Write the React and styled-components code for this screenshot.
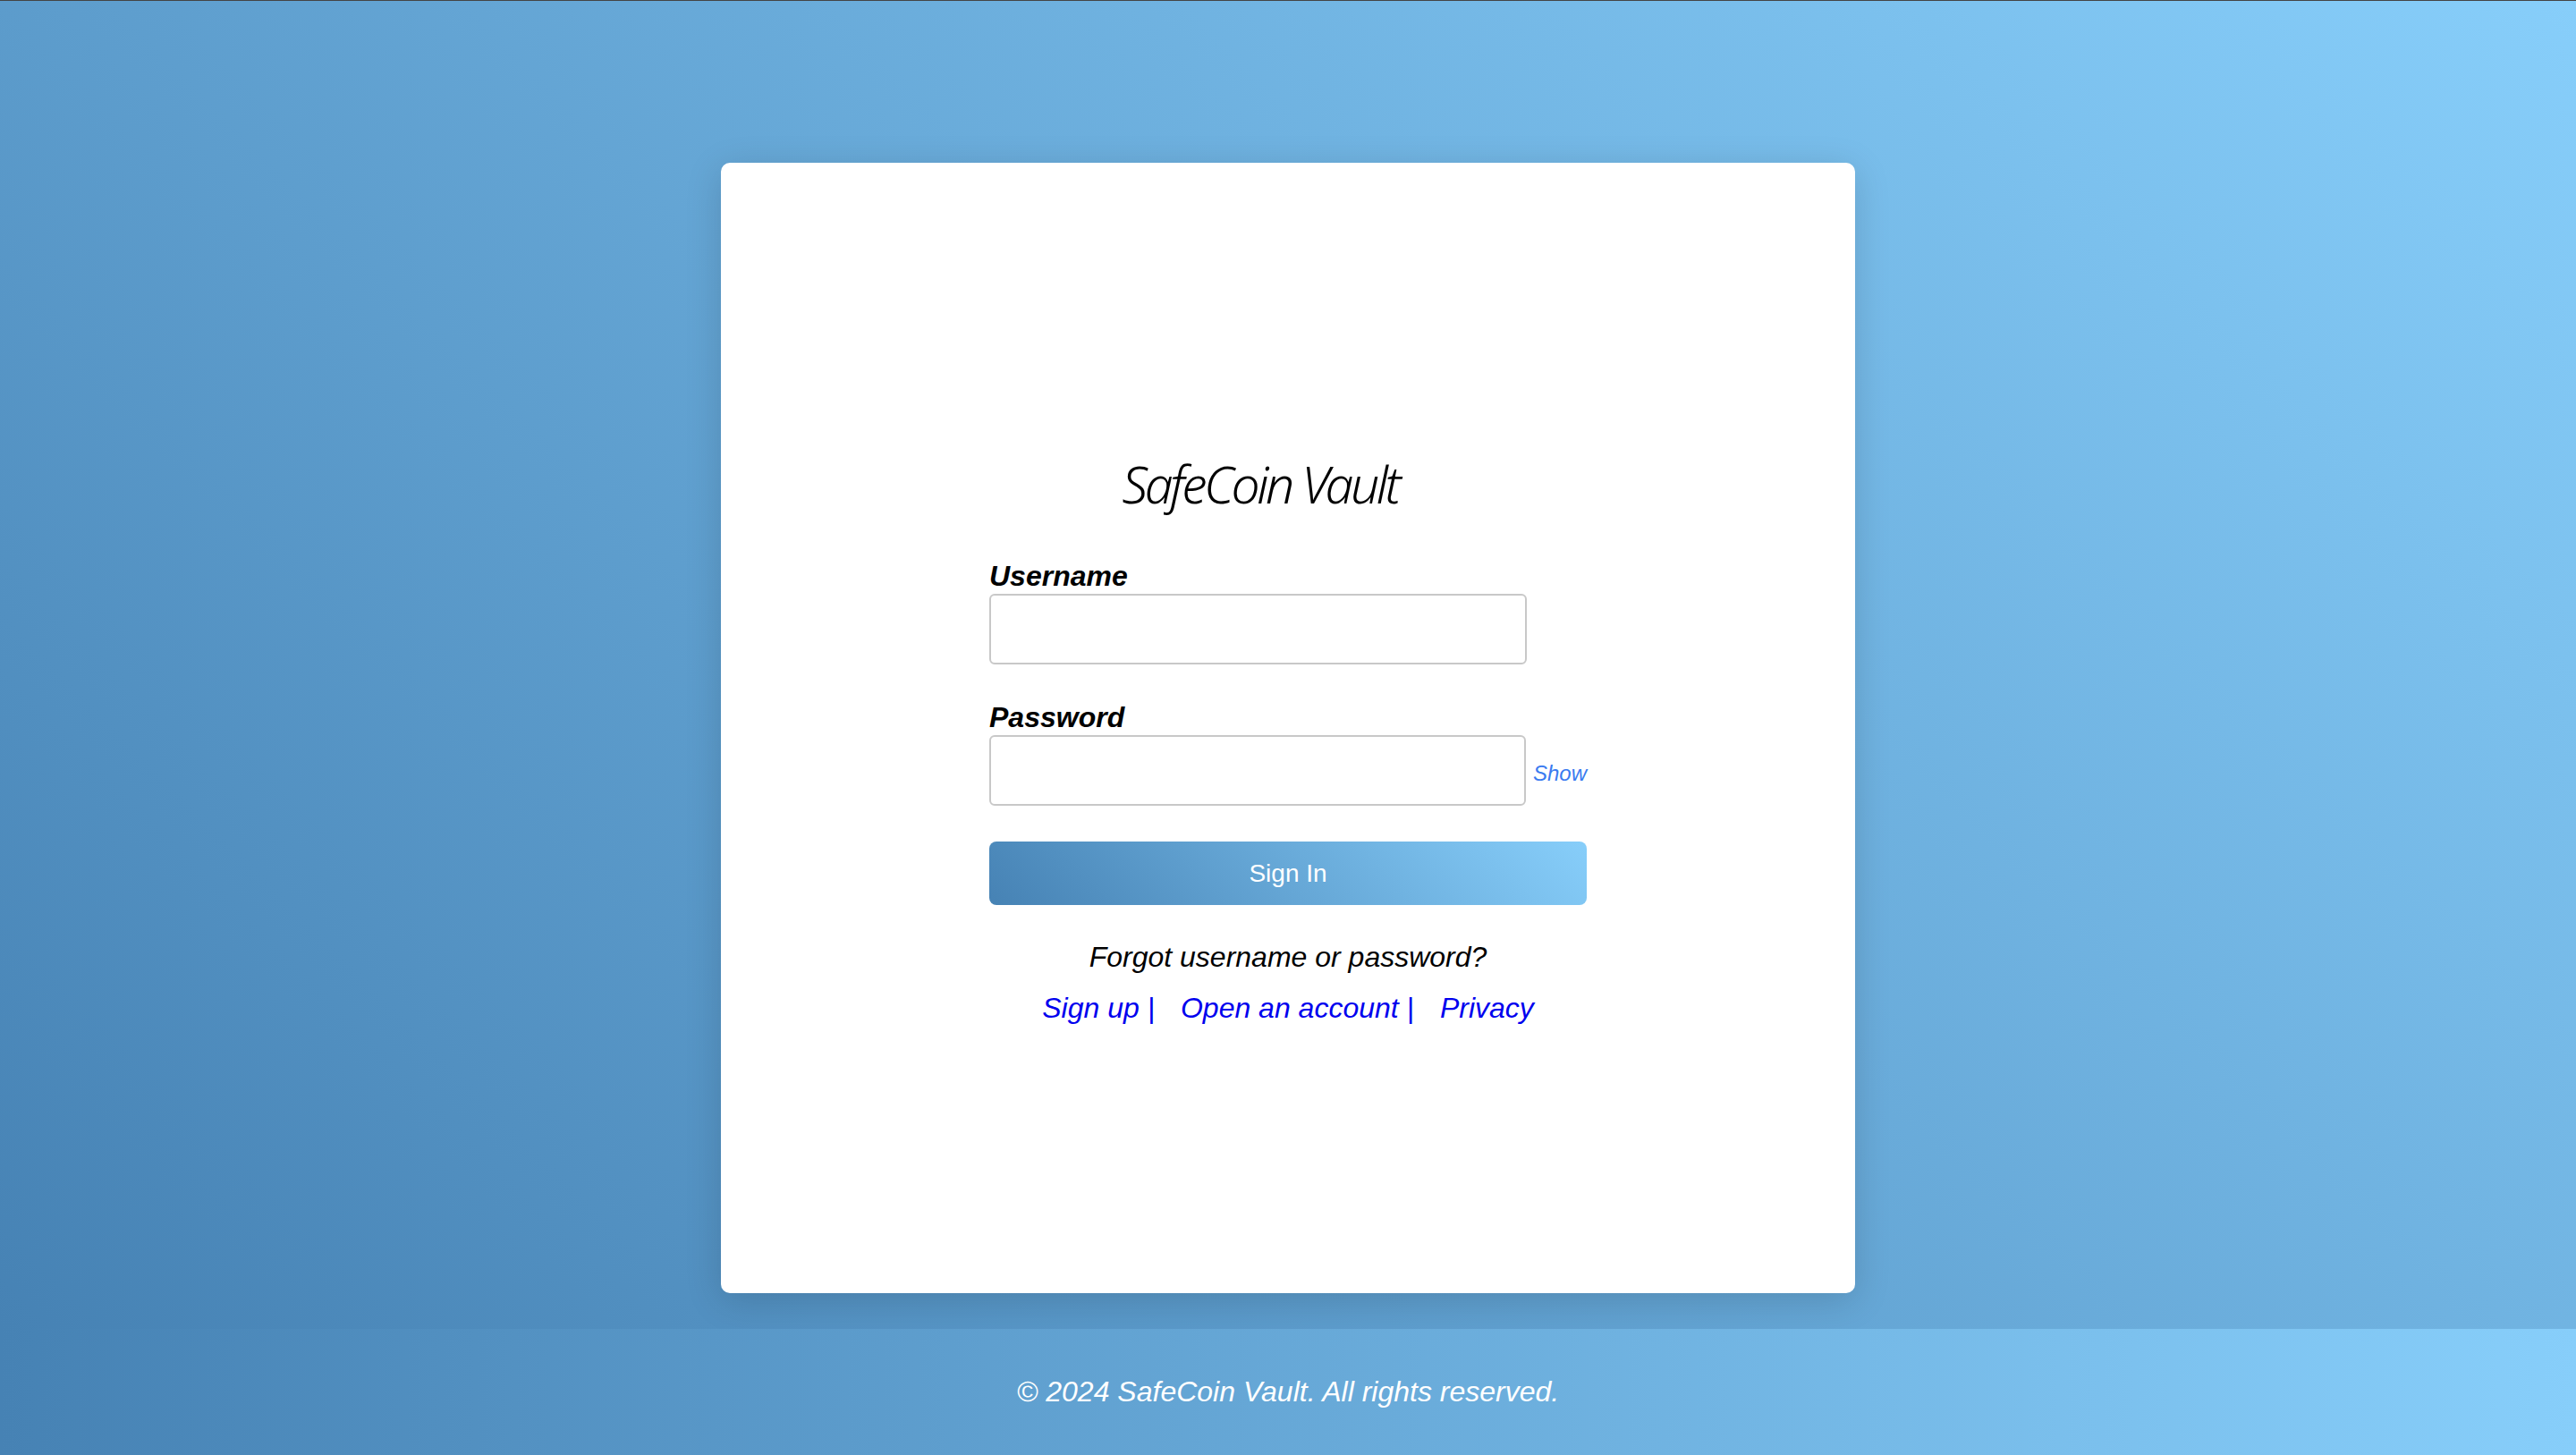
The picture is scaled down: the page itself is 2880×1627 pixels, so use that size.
import React, { useState } from "react";
import styled, { createGlobalStyle } from "styled-components";

const GlobalStyle = createGlobalStyle`
  html, body {
    margin: 0;
    padding: 0;
  }
  body {
    font-family: "Liberation Sans", Arial, sans-serif;
    font-style: italic;
    color: #000;
  }
  * {
    box-sizing: border-box;
  }
`;

const Page = styled.div`
  min-height: 1627px;
  display: flex;
  flex-direction: column;
  border-top: 1px solid #444;
`;

const Main = styled.main`
  flex: 1;
  display: flex;
  justify-content: center;
  align-items: flex-start;
  padding: 181px 0 40px;
  background: linear-gradient(45deg, #4682b4, #87cefa);
`;

const Card = styled.section`
  width: 1268px;
  height: 1264px;
  background: #fff;
  border-radius: 10px;
  box-shadow: 0 8px 40px rgba(0, 0, 0, 0.15);
  display: flex;
  justify-content: center;
  padding-top: 331px;
`;

const Form = styled.form`
  width: 668px;
  display: flex;
  flex-direction: column;
`;

const Title = styled.h1`
  width: 606px;
  margin: 0 0 57px;
  text-align: center;
  font-family: "Noto Sans", "Open Sans", sans-serif;
  font-weight: 300;
  font-style: italic;
  font-size: 57px;
  line-height: 56px;
  letter-spacing: -3.4px;
  color: #000;
`;

const Label = styled.label`
  display: block;
  font-size: 32px;
  line-height: 36px;
  font-weight: bold;
  margin-bottom: 2px;
`;

const Field = styled.div`
  margin-bottom: 41px;
`;

const InputRow = styled.div`
  display: flex;
  align-items: center;
  gap: 8px;
`;

const Input = styled.input`
  width: 601px;
  height: 79px;
  border: 2px solid #c8c8c8;
  border-radius: 6px;
  padding: 0 16px;
  font-size: 28px;
  font-family: "Liberation Sans", Arial, sans-serif;
  outline: none;
`;

const ShowLink = styled.a`
  font-size: 24px;
  line-height: 28px;
  margin-top: 6px;
  color: #3a7bf0;
  cursor: pointer;
  text-decoration: none;
`;

const SignInButton = styled.button`
  width: 100%;
  height: 71px;
  margin-top: -1px;
  border: none;
  border-radius: 8px;
  background: linear-gradient(45deg, #4682b4, #87cefa);
  color: #fff;
  font-family: "Liberation Sans", Arial, sans-serif;
  font-size: 28px;
  font-style: normal;
  cursor: pointer;
  margin-bottom: 40px;
`;

const Forgot = styled.p`
  margin: 0 0 21px;
  text-align: center;
  font-size: 32px;
  line-height: 36px;
`;

const Links = styled.nav`
  display: flex;
  justify-content: center;
  gap: 29px;
  font-size: 32px;
  line-height: 36px;
`;

const NavLink = styled.a`
  color: #0000ee;
  text-decoration: none;
  white-space: pre;
`;

const Footer = styled.footer`
  height: 141px;
  display: flex;
  align-items: center;
  justify-content: center;
  background: linear-gradient(to right, #4682b4, #87cefa);
  color: #fff;
  font-size: 32px;
`;

export default function App() {
  const [show, setShow] = useState(false);

  return (
    <>
      <GlobalStyle />
      <Page>
        <Main>
          <Card>
            <Form onSubmit={(e) => e.preventDefault()}>
              <Title>SafeCoin Vault</Title>

              <Field>
                <Label htmlFor="username">Username</Label>
                <Input id="username" type="text" />
              </Field>

              <Field>
                <Label htmlFor="password">Password</Label>
                <InputRow>
                  <Input id="password" type={show ? "text" : "password"} />
                  <ShowLink onClick={() => setShow(!show)}>
                    {show ? "Hide" : "Show"}
                  </ShowLink>
                </InputRow>
              </Field>

              <SignInButton type="submit">Sign In</SignInButton>

              <Forgot>Forgot username or password?</Forgot>
              <Links>
                <NavLink href="#">Sign up |</NavLink>
                <NavLink href="#">Open an account |</NavLink>
                <NavLink href="#">Privacy</NavLink>
              </Links>
            </Form>
          </Card>
        </Main>
        <Footer>© 2024 SafeCoin Vault. All rights reserved.</Footer>
      </Page>
    </>
  );
}
